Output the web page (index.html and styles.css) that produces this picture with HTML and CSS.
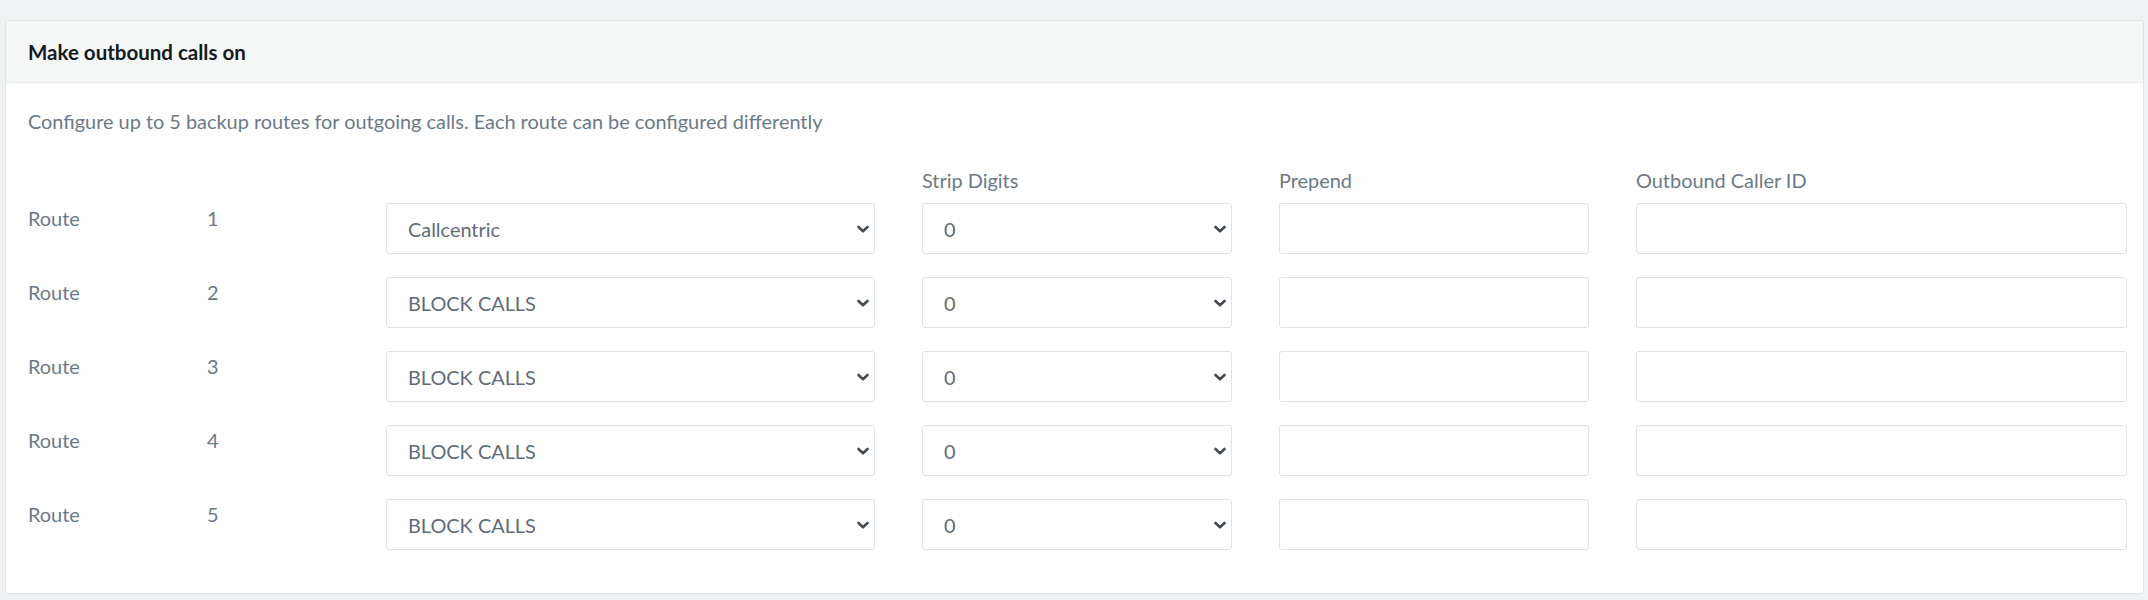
FILE: index.html
```html
<!DOCTYPE html>
<html lang="en">
<head>
<meta charset="utf-8">
<title>Make outbound calls on</title>
<link rel="stylesheet" href="styles.css">
</head>
<body>
<section class="card">
  <header class="card-head">
    <h2 class="card-title">Make outbound calls on</h2>
  </header>
  <div class="card-body">
    <p class="desc">Configure up to 5 backup routes for outgoing calls. Each route can be configured differently</p>
    <div class="grid head-row">
      <span></span><span></span><span></span>
      <span class="col-label">Strip Digits</span>
      <span class="col-label">Prepend</span>
      <span class="col-label">Outbound Caller ID</span>
    </div>
    <div class="rows">
      <div class="grid route-row">
        <span class="cell-label">Route</span>
        <span class="cell-label">1</span>
        <select class="field select"><option>Callcentric</option></select>
        <select class="field select"><option>0</option></select>
        <input class="field" type="text">
        <input class="field" type="text">
      </div>
      <div class="grid route-row">
        <span class="cell-label">Route</span>
        <span class="cell-label">2</span>
        <select class="field select"><option>BLOCK CALLS</option></select>
        <select class="field select"><option>0</option></select>
        <input class="field" type="text">
        <input class="field" type="text">
      </div>
      <div class="grid route-row">
        <span class="cell-label">Route</span>
        <span class="cell-label">3</span>
        <select class="field select"><option>BLOCK CALLS</option></select>
        <select class="field select"><option>0</option></select>
        <input class="field" type="text">
        <input class="field" type="text">
      </div>
      <div class="grid route-row">
        <span class="cell-label">Route</span>
        <span class="cell-label">4</span>
        <select class="field select"><option>BLOCK CALLS</option></select>
        <select class="field select"><option>0</option></select>
        <input class="field" type="text">
        <input class="field" type="text">
      </div>
      <div class="grid route-row">
        <span class="cell-label">Route</span>
        <span class="cell-label">5</span>
        <select class="field select"><option>BLOCK CALLS</option></select>
        <select class="field select"><option>0</option></select>
        <input class="field" type="text">
        <input class="field" type="text">
      </div>
    </div>
  </div>
</section>
</body>
</html>
```
FILE: styles.css
```css
* { box-sizing: border-box; }
html, body { height: 100%; }
body {
  margin: 0;
  padding: 20px 4px 6px 5px;
  background: #eef2f3;
  font-family: "Lato", "Open Sans", sans-serif;
  font-size: 19.9px;
  color: #6b7986;
}
.card {
  background: #ffffff;
  border: 1px solid #dfe5e7;
  border-radius: 2px;
  height: 574px;
}
.card-head {
  height: 62px;
  background: #f5f7f6;
  border-bottom: 1px solid #e8ecec;
  display: flex;
  align-items: center;
  padding: 0 22px;
}
.card-title {
  margin: 0;
  font-size: 20.5px;
  font-weight: 700;
  color: #141a1f;
}
.card-body {
  padding: 26px 17px 0 22px;
}
.desc {
  margin: 0;
  line-height: 24px;
}
.grid {
  display: grid;
  grid-template-columns: 132px 132px 489px 310px 310px 491px;
  column-gap: 47px;
}
.head-row {
  margin-top: 35px;
  line-height: 24px;
  margin-bottom: 11px;
}
.col-label { color: #6b7986; }
.rows {
  display: flex;
  flex-direction: column;
  gap: 23px;
}
.route-row { align-items: start; }
.cell-label {
  line-height: 24px;
  padding-top: 3px;
}
.field {
  height: 51px;
  width: 100%;
  border: 1.5px solid #dde4e7;
  border-radius: 3px;
  background: #ffffff;
  font-family: inherit;
  font-size: 19.9px;
  color: #5f6c77;
  padding: 0 40px 0 21px;
  margin: 0;
  outline: none;
}
.select {
  -webkit-appearance: none;
  appearance: none;
  background-image: url("data:image/svg+xml,%3Csvg xmlns='http://www.w3.org/2000/svg' width='14' height='10' viewBox='0 0 14 10'%3E%3Cpath d='M2.5 3 L7 7.2 L11.5 3' fill='none' stroke='%23444b52' stroke-width='2.6' stroke-linecap='round' stroke-linejoin='round'/%3E%3C/svg%3E");
  background-repeat: no-repeat;
  background-position: right 4px center;
  background-size: 14px 10px;
}
```
